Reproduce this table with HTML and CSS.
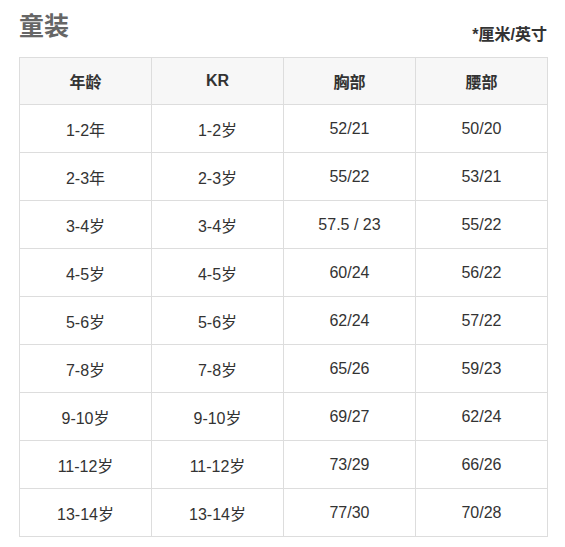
FILE: index.html
```html
<!DOCTYPE html>
<html lang="zh">
<head>
<meta charset="utf-8">
<link rel="stylesheet" href="styles.css">
</head>
<body>
<div class="page">
  <div class="head">
    <h1 class="title">童装</h1>
    <span class="unit">*厘米/英寸</span>
  </div>
  <table class="size">
    <thead>
      <tr><th>年龄</th><th>KR</th><th>胸部</th><th>腰部</th></tr>
    </thead>
    <tbody>
      <tr><td>1-2年</td><td>1-2岁</td><td>52/21</td><td>50/20</td></tr>
      <tr><td>2-3年</td><td>2-3岁</td><td>55/22</td><td>53/21</td></tr>
      <tr><td>3-4岁</td><td>3-4岁</td><td>57.5 / 23</td><td>55/22</td></tr>
      <tr><td>4-5岁</td><td>4-5岁</td><td>60/24</td><td>56/22</td></tr>
      <tr><td>5-6岁</td><td>5-6岁</td><td>62/24</td><td>57/22</td></tr>
      <tr><td>7-8岁</td><td>7-8岁</td><td>65/26</td><td>59/23</td></tr>
      <tr><td>9-10岁</td><td>9-10岁</td><td>69/27</td><td>62/24</td></tr>
      <tr><td>11-12岁</td><td>11-12岁</td><td>73/29</td><td>66/26</td></tr>
      <tr><td>13-14岁</td><td>13-14岁</td><td>77/30</td><td>70/28</td></tr>
    </tbody>
  </table>
</div>
</body>
</html>
```
FILE: styles.css
```css
html, body {
  margin: 0;
  padding: 0;
  background: #fff;
}
.page {
  width: 529px;
  padding: 11px 0 0 19px;
  font-family: "Liberation Sans", Arial, "Noto Sans CJK SC", sans-serif;
  color: #333;
}
.head {
  display: flex;
  justify-content: space-between;
  align-items: flex-end;
  height: 46px;
}
.title {
  margin: 0;
  font-size: 25px;
  line-height: 30px;
  font-weight: bold;
  color: #666;
  align-self: flex-start;
}
.unit {
  font-size: 16px;
  font-weight: bold;
  color: #333;
  line-height: 20px;
  margin-bottom: 12px;
  margin-right: 1px;
}
.size {
  width: 529px;
  border-collapse: collapse;
  table-layout: fixed;
  font-size: 16px;
}
.size th, .size td {
  border: 1px solid #ddd;
  height: 47px;
  padding: 0;
  text-align: center;
  vertical-align: middle;
}
.size th {
  height: 46px;
  background: #f7f7f7;
  font-weight: bold;
  font-size: 16px;
  color: #333;
}
.size td {
  color: #333;
}
```
